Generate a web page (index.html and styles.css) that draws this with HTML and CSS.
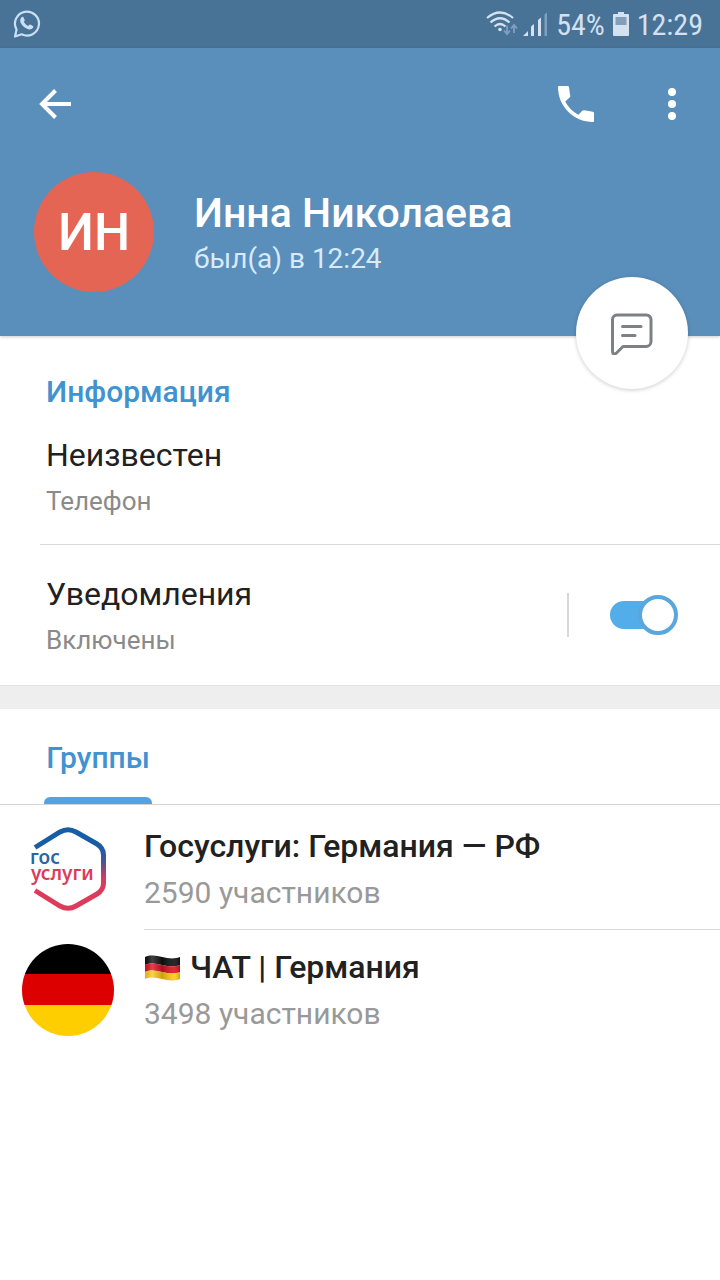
FILE: index.html
```html
<!DOCTYPE html>
<html lang="ru">
<head>
<meta charset="utf-8">
<meta name="viewport" content="width=device-width, initial-scale=1">
<title>Инна Николаева</title>
<link rel="stylesheet" href="styles.css">
</head>
<body>
<div class="statusbar">
  <svg class="statusbar-app" width="28" height="30" viewBox="0 0 28 30" fill="none" stroke="#c9dff5" stroke-width="2.2">
    <path d="M2 27.500 3.600 20.600A12 12 0 1 1 8.600 25.300Z" stroke-linejoin="round"/>
    <path d="M8.600 8.200c.8-.7 1.700-.5 2 .2l1.100 2.500c.2.5-.1 1-.9 1.900 1 2 2.500 3.300 4.500 4.200 1-1.200 1.400-1.700 2-1.400l2.600 1.300c.7.4.5 1.400-.1 2.200-1 1.200-2.600 1.600-4.300 1.100-4-1.200-7.200-4.300-8.200-7.500-.4-1.800.3-3.500 1.300-4.500z" fill="#c9dff5" stroke="none"/>
  </svg>
  <div class="statusbar-info">
    <svg class="wifi" width="32" height="26" viewBox="0 0 32 26" fill="none" stroke="#d3e1f1" stroke-width="2.2">
      <path d="M1 7Q14-4 27 7M4.500 11.500Q14 3 23.500 11.500M8.500 15.500Q14 10.500 19.500 15.500"/>
      <circle cx="14" cy="18.500" r="1.800" fill="#d3e1f1" stroke="none"/>
      <path d="M21 14.500v8M18 19.500l3 3.500 3-3.500M28 22v-8M25 17.500l3-3.500 3 3.500" stroke="#7f9fbf" stroke-width="1.800"/>
    </svg>
    <svg width="26" height="26" viewBox="0 0 26 26" fill="#d3e1f1">
      <path d="M1 25 6 20v5zM9 15.500l3-2.500V25H9zM16 9l3-2.500V25h-3z"/>
      <path d="M22.500 3.500 25 1.500V25h-2.500z" fill="#7f9fbf"/>
    </svg>
    <span>54%</span>
    <svg width="16" height="24" viewBox="0 0 16 24">
      <path d="M5 0h6v2h4a1 1 0 0 1 1 1v20a1 1 0 0 1-1 1H1a1 1 0 0 1-1-1V3a1 1 0 0 1 1-1h4z" fill="#d3e1f1"/>
      <path d="M2.500 5h11v8h-11z" fill="#829eb8"/>
    </svg>
    <span>12:29</span>
  </div>
</div>

<header class="header">
  <nav class="toolbar">
    <button class="icon-button" aria-label="Назад">
      <svg width="34" height="34" viewBox="0 0 34 34" fill="none" stroke="#fff" stroke-width="4"><path d="M34 17H5M18.500 3.500 5 17l13.500 13.500"/></svg>
    </button>
    <div class="toolbar-actions">
      <button class="icon-button" aria-label="Позвонить">
        <svg width="48" height="48" viewBox="0 0 24 24" fill="#fff"><path d="M6.620 10.790c1.440 2.830 3.760 5.140 6.590 6.590l1.900-2c.25-.26.6-.36 1-.3l4.300.75c.4.080.6.350.6.700V20.500c0 .3-.2.5-.5.500-9.700 0-17.500-7.800-17.500-17.500 0-.3.2-.5.5-.5h4.300c.35 0 .6.2.67.58l.6 4.200c.5.350-.3.740-.28 1.020z"/></svg>
      </button>
      <button class="icon-button" aria-label="Ещё">
        <svg width="8" height="32" viewBox="0 0 8 32" fill="#fff"><circle cx="4" cy="4" r="4"/><circle cx="4" cy="16" r="4"/><circle cx="4" cy="28" r="4"/></svg>
      </button>
    </div>
  </nav>
  <div class="profile">
    <div class="profile-avatar">ИН</div>
    <div class="profile-text">
      <h1 class="profile-name">Инна Николаева</h1>
      <p class="profile-status">был(а) в 12:24</p>
    </div>
  </div>
  <button class="message-button" aria-label="Написать сообщение">
    <svg width="44" height="44" viewBox="0 0 44 44" fill="none" stroke="#7d8185" stroke-width="3" stroke-linecap="round" stroke-linejoin="round">
      <path d="M7 4h29.500a4.500 4.500 0 0 1 4.500 4.500v22a5 5 0 0 1-5 5H13l-6.500 6.500Q2.500 44.500 2.500 40V8.500A4.500 4.500 0 0 1 7 4z"/>
      <path d="M12.500 15.500H31M12.500 24.500H25"/>
    </svg>
  </button>
</header>

<main>
  <section class="info">
    <h2 class="section-title">Информация</h2>
    <div class="info-row">
      <div class="info-text">
        <span class="info-value">Неизвестен</span>
        <span class="info-label">Телефон</span>
      </div>
    </div>
    <div class="info-row info-row-switch">
      <label class="info-text" for="notifications">
        <span class="info-value">Уведомления</span>
        <span class="info-label">Включены</span>
      </label>
      <div class="switch-area">
        <input class="switch" type="checkbox" id="notifications" checked>
      </div>
    </div>
  </section>

  <section class="groups">
    <div class="tabs">
      <button class="tab">Группы</button>
    </div>
    <ul class="group-list">
      <li class="group">
        <svg class="group-avatar" viewBox="0 0 92 92">
          <defs>
            <linearGradient id="hex" gradientUnits="userSpaceOnUse" x1="0" y1="20" x2="0" y2="66">
              <stop offset="0" stop-color="#175da5"/><stop offset=".4" stop-color="#46559a"/><stop offset=".75" stop-color="#d63a5e"/><stop offset="1" stop-color="#dc3b5b"/>
            </linearGradient>
          </defs>
          <path d="M13 24.500 38 9Q46 4.500 54 9L75 21Q81.500 25 81.500 32V60Q81.500 67 75 71L54 83Q46 87.500 38 83L13 67.500" fill="none" stroke="url(#hex)" stroke-width="5"/>
          <text class="logo-text"><tspan class="logo-text-top" x="8" y="41">гос</tspan><tspan class="logo-text-bottom" x="9" y="57">услуги</tspan></text>
        </svg>
        <div class="group-text">
          <span class="group-name">Госуслуги: Германия — РФ</span>
          <span class="group-members">2590 участников</span>
        </div>
      </li>
      <li class="group">
        <div class="group-avatar group-avatar-flag"></div>
        <div class="group-text">
          <span class="group-name"><svg class="flag" viewBox="0 0 38 26" role="img" aria-label="Флаг Германии">
            <defs>
              <linearGradient id="shade"><stop offset="0" stop-color="#000" stop-opacity=".1"/><stop offset=".2" stop-color="#fff" stop-opacity=".2"/><stop offset=".5" stop-color="#000" stop-opacity=".2"/><stop offset=".85" stop-color="#fff" stop-opacity=".1"/><stop offset="1" stop-color="#000" stop-opacity=".2"/></linearGradient>
            </defs>
            <path d="M1 2C13-3 23 7 36 2V10C23 15 13 5 1 10z" fill="#111"/>
            <path d="M1 10C13 5 23 15 36 10V17C23 22 13 12 1 17z" fill="#dd1220"/>
            <path d="M1 17C13 12 23 22 36 17V24C23 29 13 19 1 24z" fill="#ffc814"/>
            <path d="M1 2C13-3 23 7 36 2V24C23 29 13 19 1 24z" fill="url(#shade)"/>
          </svg> ЧАТ | Германия</span>
          <span class="group-members">3498 участников</span>
        </div>
      </li>
    </ul>
  </section>
</main>
</body>
</html>
```

FILE: styles.css
```css
*,
*::before,
*::after {
  box-sizing: border-box;
}

body {
  margin: 0;
  min-height: 100vh;
  background: #fff;
  color: #212121;
  font-family: Roboto, "Noto Sans", sans-serif;
}

h1, h2, p, ul {
  margin: 0;
  padding: 0;
}

button {
  padding: 0;
  border: 0;
  background: none;
  font-family: inherit;
}

svg {
  display: block;
}

.statusbar {
  display: flex;
  align-items: center;
  justify-content: space-between;
  height: 48px;
  padding: 0 17px 0 13px;
  background: #487296;
  color: #d3e1f1;
  font-family: "Roboto Condensed", Roboto, sans-serif;
  font-size: 30px;
}

.statusbar-info {
  display: flex;
  align-items: center;
  gap: 8px;
}

.wifi {
  margin-right: -4px;
}

.header {
  position: relative;
  height: 288px;
  background: #5a8fbb;
  color: #fff;
  box-shadow: 0 1px 3px rgba(0, 0, 0, 0.2);
}

.toolbar {
  display: flex;
  align-items: center;
  justify-content: space-between;
  height: 112px;
  padding: 0 44px 0 37px;
}

.toolbar-actions {
  display: flex;
  align-items: center;
  gap: 68px;
}

.profile {
  display: flex;
  align-items: center;
  gap: 40px;
  padding: 12px 34px;
}

.profile-avatar {
  display: flex;
  flex: none;
  align-items: center;
  justify-content: center;
  width: 120px;
  height: 120px;
  border-radius: 50%;
  background: #e56555;
  font-size: 51px;
  font-weight: 500;
}

.profile-name {
  font-size: 41px;
  font-weight: 500;
  line-height: 48px;
}

.profile-status {
  margin-top: 5px;
  color: #d7eafa;
  font-size: 28px;
  line-height: 34px;
}

.message-button {
  position: absolute;
  right: 32px;
  bottom: -53px;
  display: flex;
  align-items: center;
  justify-content: center;
  width: 112px;
  height: 112px;
  border-radius: 50%;
  background: #fff;
  box-shadow: 0 1px 4px rgba(0, 0, 0, 0.2);
}

.info {
  padding-top: 38px;
}

.section-title {
  padding: 0 46px;
  color: #3f93d0;
  font-size: 30px;
  font-weight: 500;
  line-height: 36px;
}

.info-row {
  display: flex;
  align-items: center;
  justify-content: space-between;
  margin-left: 40px;
  padding: 25px 42px 27px 6px;
  border-bottom: 1px solid #d9d9d9;
}

.info-row-switch {
  padding-top: 29px;
  padding-bottom: 29px;
  border-bottom: 0;
}

.info-text {
  display: flex;
  flex-direction: column;
  gap: 10px;
}

.info-value {
  font-size: 32px;
  line-height: 40px;
}

.info-label {
  color: #8a8a8a;
  font-size: 26px;
  line-height: 32px;
}

.switch-area {
  display: flex;
  align-items: center;
  height: 44px;
  padding-left: 41px;
  border-left: 2px solid #d8d8d8;
}

.switch {
  position: relative;
  width: 68px;
  height: 40px;
  margin: 0;
  appearance: none;
}

.switch::before {
  content: "";
  position: absolute;
  inset: 6px 8px 6px 0;
  border-radius: 14px;
  background: #52ade9;
}

.switch::after {
  content: "";
  position: absolute;
  top: 0;
  right: 0;
  width: 40px;
  height: 40px;
  border: 4px solid #5aa7de;
  border-radius: 50%;
  background: #fff;
}

.groups {
  border-top: 24px solid #eee;
}

.info {
  border-bottom: 1px solid #e2e2e2;
}

.groups {
  border-top-width: 23px;
}

.tabs {
  display: flex;
  height: 96px;
  padding: 0 44px;
  border-bottom: 1px solid #d5d5d5;
}

.tab {
  display: flex;
  flex-direction: column;
  justify-content: space-between;
  width: 108px;
  padding-top: 31px;
  color: #3f93d0;
  font-size: 30px;
  font-weight: 500;
  line-height: 36px;
  text-align: center;
}

.tab::after {
  content: "";
  height: 7px;
  width: 108px;
  border-radius: 6px 6px 0 0;
  background: #52a3e3;
}

.tab {
  align-items: center;
}

.group-list {
  padding-top: 4px;
  list-style: none;
}

.group {
  display: flex;
  gap: 30px;
  padding-left: 22px;
}

.group-avatar {
  flex: none;
  width: 92px;
  height: 92px;
  margin-top: 14px;
  border-radius: 50%;
}

.group-avatar-flag {
  background: linear-gradient(#000 33%, #d00 33%, #d00 66%, #ffce00 66%);
}

.group-text {
  display: flex;
  flex: 1;
  flex-direction: column;
  gap: 9px;
  padding: 17px 20px 18px 0;
  border-bottom: 1px solid #d9d9d9;
}

.group:last-child .group-text {
  border-bottom: 0;
}

.group-name {
  font-size: 32px;
  font-weight: 500;
  line-height: 40px;
}

.group-members {
  color: #999;
  font-size: 30px;
  line-height: 36px;
}

.flag {
  display: inline-block;
  width: 38px;
  height: 26px;
  vertical-align: -3px;
}

.logo-text {
  font-family: "Noto Sans", sans-serif;
  font-size: 19px;
  font-weight: 600;
}

.logo-text-top {
  fill: #2a65a8;
}

.logo-text-bottom {
  fill: #dc3b5b;
}
```
